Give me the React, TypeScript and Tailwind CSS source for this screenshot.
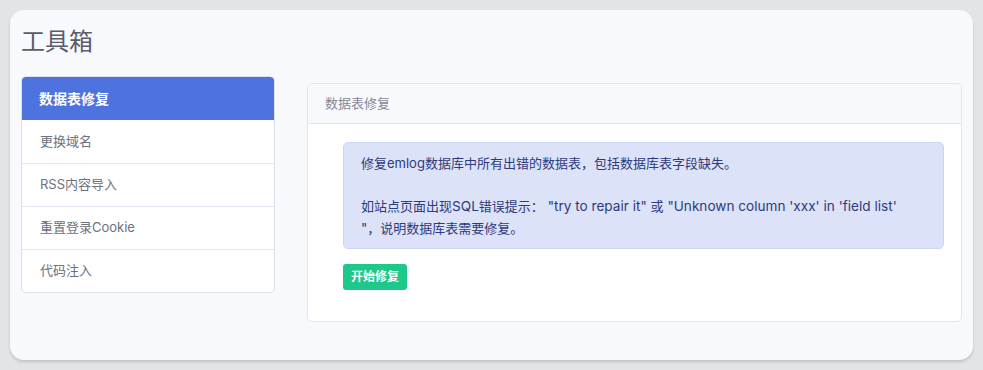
import React from "react";

export default function App() {
  const items = ["数据表修复", "更换域名", "RSS内容导入", "重置登录Cookie", "代码注入"];
  const latin = "text-[13.6px]";
  return (
    <div
      className="w-[983px] h-[370px] bg-[#e3e4e6] p-[10px]"
      style={{ fontFamily: 'Inter, "Noto Sans CJK SC", sans-serif' }}
    >
      <div className="w-[963px] h-[350px] rounded-[14px] bg-[#f8f9fc] shadow-[0_2px_3px_rgba(0,0,0,0.15)] pt-[17px] px-[11px]">
        <h1 className="text-[24px] leading-[30px] text-[#5a5c69] font-normal">工具箱</h1>
        <div className="flex mt-[19px] gap-[32px]">
          <div className="w-[254px] rounded-[5px] border border-[#dfe1e8] bg-white overflow-hidden self-start">
            {items.map((t, i) =>
              i === 0 ? (
                <div key={t} className="h-[44px] bg-[#4e73df] text-white font-bold text-[14px] flex items-center pl-[18px] -mx-px -mt-px">
                  {t}
                </div>
              ) : (
                <div key={t} className={`h-[43px] flex items-center pl-[18px] text-[13px] text-[#6e707e] ${i > 1 ? "border-t border-[#e3e6f0]" : ""}`}>
                  {t}
                </div>
              )
            )}
          </div>
          <div className="w-[655px] h-[239px] mt-[7px] rounded-[5px] border border-[#e3e6f0] bg-white overflow-hidden">
            <div className="h-[40px] bg-[#f8f9fc] border-b border-[#e3e6f0] flex items-center pl-[17px] text-[13px] text-[#858796]">
              数据表修复
            </div>
            <div className="pt-[18px] pl-[35px] pr-[17px]">
              <div className="rounded-[5px] border border-[#ccd5f4] bg-[#dce2f8] text-[#2e3a7c] text-[13px] leading-[22px] pt-[9px] pb-[9px] pl-[17px] pr-[10px]">
                <p>修复emlog数据库中所有出错的数据表，包括数据库表字段缺失。</p>
                <p className="mt-[21px]">
                  如站点页面出现<span className={latin}>SQL</span>错误提示：<span className={latin}> "try to repair it" </span>或<span className={latin}> "Unknown column 'xxx' in 'field list'</span>
                  <br />
                  <span className={latin}>"</span>，说明数据库表需要修复。
                </p>
              </div>
              <button className="mt-[15px] h-[26px] px-[8px] rounded-[3px] bg-[#1cc88a] text-white text-[12px] font-bold">
                开始修复
              </button>
            </div>
          </div>
        </div>
      </div>
    </div>
  );
}
